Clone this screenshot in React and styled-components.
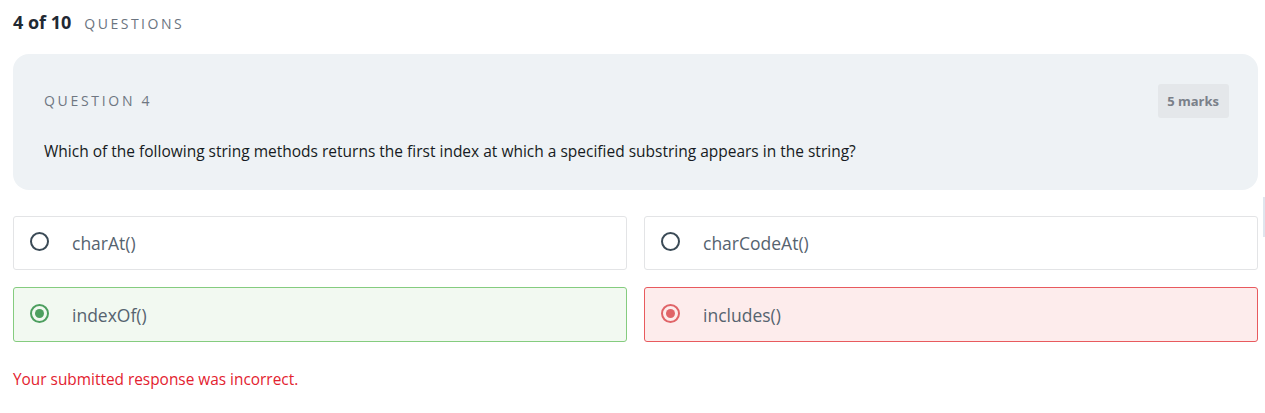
import React from "react";
import styled, { createGlobalStyle } from "styled-components";

const GlobalStyle = createGlobalStyle`
    body {
        margin: 0;
        background: #ffffff;
        font-family: "Open Sans", "Noto Sans", sans-serif;
    }
`;

const Page = styled.div`
    padding: 10px 7px 0 13px;
`;

const Progress = styled.div`
    display: flex;
    align-items: baseline;
    gap: 13px;
    height: 28px;
`;

const Count = styled.span`
    font-size: 18px;
    font-weight: 700;
    color: #1f2933;
`;

const CountLabel = styled.span`
    font-size: 14px;
    letter-spacing: 2.5px;
    color: #6b7480;
`;

const QuestionCard = styled.div`
    margin-top: 16px;
    background: #eef2f5;
    border-radius: 16px;
    padding: 30px 29px 28px 31px;
`;

const CardHead = styled.div`
    display: flex;
    align-items: center;
    justify-content: space-between;
    height: 33px;
`;

const QuestionLabel = styled.span`
    font-size: 14px;
    letter-spacing: 2.7px;
    color: #6f7782;
`;

const Marks = styled.span`
    background: #e4e7ea;
    border-radius: 3px;
    padding: 8px 10px 8px 9px;
    font-size: 13px;
    font-weight: 700;
    color: #7a8089;
`;

const QuestionText = styled.p`
    margin: 23px 0 0;
    font-size: 15.5px;
    line-height: 22px;
    color: #161b22;
`;

const Options = styled.div`
    display: grid;
    grid-template-columns: 1fr 1fr;
    gap: 17px;
    margin-top: 26px;
`;

const tones = {
    idle: { bg: "#ffffff", border: "#e3e4e6", ring: "#3a4a56" },
    correct: { bg: "#f2f9f1", border: "#85cc7f", ring: "#4d9f5f" },
    wrong: { bg: "#fdecec", border: "#e85a5e", ring: "#e06468" },
};

const Option = styled.label`
    display: flex;
    align-items: center;
    gap: 23px;
    height: ${(p) => (p.$row === 2 ? 53 : 52)}px;
    padding: 0 16px;
    background: ${(p) => tones[p.$tone].bg};
    border: 1px solid ${(p) => tones[p.$tone].border};
    border-radius: 3px;
    cursor: pointer;
`;

const Radio = styled.span`
    position: relative;
    width: 15px;
    height: 15px;
    flex: none;
    border: 2px solid ${(p) => tones[p.$tone].ring};
    border-radius: 50%;
    margin-top: -3px;

    &::after {
        content: "";
        display: ${(p) => (p.$checked ? "block" : "none")};
        position: absolute;
        inset: 3px;
        border-radius: 50%;
        background: ${(p) => tones[p.$tone].ring};
    }
`;

const OptionText = styled.span`
    font-size: 17.5px;
    color: #56636f;
`;

const Feedback = styled.p`
    margin: 27px 0 0;
    font-size: 15.4px;
    color: #e3222f;
`;

const ScrollHint = styled.div`
    position: absolute;
    right: 0;
    top: 197px;
    width: 2px;
    height: 40px;
    background: #dfe6ee;
`;

const options = [
    { text: "charAt()", tone: "idle", checked: false, row: 1 },
    { text: "charCodeAt()", tone: "idle", checked: false, row: 1 },
    { text: "indexOf()", tone: "correct", checked: true, row: 2 },
    { text: "includes()", tone: "wrong", checked: true, row: 2 },
];

export default function App() {
    return (
        <>
            <GlobalStyle />
            <Page>
                <Progress>
                    <Count>4 of 10</Count>
                    <CountLabel>QUESTIONS</CountLabel>
                </Progress>
                <QuestionCard>
                    <CardHead>
                        <QuestionLabel>QUESTION 4</QuestionLabel>
                        <Marks>5 marks</Marks>
                    </CardHead>
                    <QuestionText>
                        Which of the following string methods returns the first
                        index at which a specified substring appears in the
                        string?
                    </QuestionText>
                </QuestionCard>
                <Options>
                    {options.map((o) => (
                        <Option key={o.text} $tone={o.tone} $row={o.row}>
                            <Radio $tone={o.tone} $checked={o.checked} />
                            <OptionText>{o.text}</OptionText>
                        </Option>
                    ))}
                </Options>
                <Feedback>Your submitted response was incorrect.</Feedback>
            </Page>
            <ScrollHint />
        </>
    );
}
